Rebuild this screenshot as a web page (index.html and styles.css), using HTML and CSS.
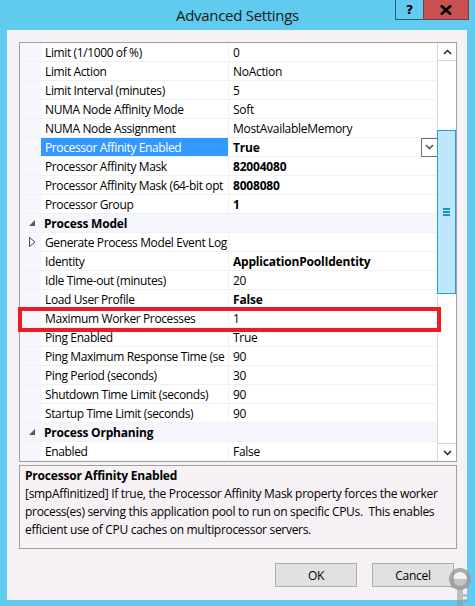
FILE: index.html
```html
<!DOCTYPE html>
<html>
<head>
<meta charset="utf-8">
<link rel="stylesheet" href="styles.css">
</head>
<body>
<div class="window">
  <div class="titlebar">
    <div class="spacer"></div>
    <div class="title">Advanced Settings</div>
    <div class="caption">
      <div class="cap-btn help">?</div>
      <div class="cap-btn close">
        <svg width="12" height="10" viewBox="0 0 12 10"><path d="M1 0.5 L11 9.5 M11 0.5 L1 9.5" stroke="#000" stroke-width="2.6"/></svg>
      </div>
    </div>
  </div>
  <div class="client">
    <div class="grid">
      <div class="rows">
        <div class="row"><div class="gut"></div><div class="name">Limit (1/1000 of %)</div><div class="val">0</div></div>
        <div class="row"><div class="gut"></div><div class="name">Limit Action</div><div class="val">NoAction</div></div>
        <div class="row"><div class="gut"></div><div class="name">Limit Interval (minutes)</div><div class="val">5</div></div>
        <div class="row"><div class="gut"></div><div class="name">NUMA Node Affinity Mode</div><div class="val">Soft</div></div>
        <div class="row"><div class="gut"></div><div class="name">NUMA Node Assignment</div><div class="val">MostAvailableMemory</div></div>
        <div class="row"><div class="gut"></div><div class="name sel">Processor Affinity Enabled</div><div class="val b edit"><span>True</span><span class="dd"><svg width="9" height="6" viewBox="0 0 9 6"><path d="M1 1 L4.5 4.5 L8 1" fill="none" stroke="#555" stroke-width="1.6"/></svg></span></div></div>
        <div class="row"><div class="gut"></div><div class="name">Processor Affinity Mask</div><div class="val b">82004080</div></div>
        <div class="row"><div class="gut"></div><div class="name">Processor Affinity Mask (64-bit opt</div><div class="val b">8008080</div></div>
        <div class="row"><div class="gut"></div><div class="name">Processor Group</div><div class="val b">1</div></div>
        <div class="row cat"><div class="gut"><svg width="7" height="7" viewBox="0 0 7 7"><polygon points="6,0 6,6 0,6" fill="#595959"/></svg></div><div class="catname">Process Model</div></div>
        <div class="row"><div class="gut"><svg width="7" height="10" viewBox="0 0 7 10"><polygon points="0.5,0.5 6,5 0.5,9.5" fill="#fff" stroke="#444" stroke-width="1"/></svg></div><div class="name">Generate Process Model Event Log</div><div class="val"></div></div>
        <div class="row"><div class="gut"></div><div class="name">Identity</div><div class="val b">ApplicationPoolIdentity</div></div>
        <div class="row"><div class="gut"></div><div class="name">Idle Time-out (minutes)</div><div class="val">20</div></div>
        <div class="row"><div class="gut"></div><div class="name">Load User Profile</div><div class="val b">False</div></div>
        <div class="row"><div class="gut"></div><div class="name">Maximum Worker Processes</div><div class="val">1</div></div>
        <div class="row"><div class="gut"></div><div class="name">Ping Enabled</div><div class="val">True</div></div>
        <div class="row"><div class="gut"></div><div class="name">Ping Maximum Response Time (se</div><div class="val">90</div></div>
        <div class="row"><div class="gut"></div><div class="name">Ping Period (seconds)</div><div class="val">30</div></div>
        <div class="row"><div class="gut"></div><div class="name">Shutdown Time Limit (seconds)</div><div class="val">90</div></div>
        <div class="row"><div class="gut"></div><div class="name">Startup Time Limit (seconds)</div><div class="val">90</div></div>
        <div class="row cat"><div class="gut"><svg width="7" height="7" viewBox="0 0 7 7"><polygon points="6,0 6,6 0,6" fill="#595959"/></svg></div><div class="catname">Process Orphaning</div></div>
        <div class="row"><div class="gut"></div><div class="name">Enabled</div><div class="val">False</div></div>
      </div>
      <div class="scrollbar">
        <div class="arrow"><svg width="9" height="6" viewBox="0 0 9 6"><path d="M1 5 L4.5 1.5 L8 5" fill="none" stroke="#222" stroke-width="1.5"/></svg></div>
        <div class="track">
          <div class="thumb"><span class="grip"></span><span class="grip"></span><span class="grip"></span></div>
        </div>
        <div class="arrow"><svg width="9" height="6" viewBox="0 0 9 6"><path d="M1 1 L4.5 4.5 L8 1" fill="none" stroke="#222" stroke-width="1.5"/></svg></div>
      </div>
      <div class="highlight"></div>
    </div>
    <div class="desc">
      <div class="desc-title">Processor Affinity Enabled</div>
      <div class="desc-text">[smpAffinitized] If true, the Processor Affinity Mask property forces the worker process(es) serving this application pool to run on specific CPUs.&nbsp; This enables efficient use of CPU caches on multiprocessor servers.</div>
    </div>
    <div class="buttons">
      <div class="btn">OK</div>
      <div class="btn">Cancel</div>
    </div>
  </div>
  <svg class="keyicon" width="24" height="40" viewBox="0 0 24 40">
    <circle cx="12" cy="11" r="9" fill="none" stroke="#9a9a9a" stroke-width="4" opacity="0.8"/>
    <rect x="3" y="11" width="18" height="9" fill="#9a9a9a" opacity="0.55"/>
    <rect x="9" y="19" width="6" height="20" fill="#9a9a9a" opacity="0.6"/>
    <rect x="15" y="26" width="4" height="3" fill="#9a9a9a" opacity="0.6"/>
    <rect x="15" y="31" width="4" height="3" fill="#9a9a9a" opacity="0.6"/>
  </svg>
</div>
</body>
</html>
```

FILE: styles.css
```css
* { box-sizing: border-box; }
html, body { margin: 0; padding: 0; }
body {
  width: 475px;
  height: 606px;
  overflow: hidden;
  background: #60caef;
  font-family: "Open Sans", "Noto Sans", sans-serif;
  font-size: 12px;
  letter-spacing: -0.3px;
  color: #000;
}
.window {
  position: relative;
  width: 475px;
  height: 606px;
  background: #60caef;
}
.titlebar {
  height: 30px;
  display: grid;
  grid-template-columns: 1fr auto 1fr;
  align-items: start;
}
.title {
  font-size: 15px;
  line-height: 30px;
  color: #1a1a1a;
  letter-spacing: -0.3px;
}
.caption {
  display: flex;
  justify-content: flex-end;
  padding-right: 6px;
}
.cap-btn {
  height: 20px;
  display: flex;
  align-items: center;
  justify-content: center;
  border: 1px solid #2c5a78;
  border-top: none;
}
.help {
  width: 28px;
  font-family: "DejaVu Sans", sans-serif;
  font-weight: bold;
  font-size: 13px;
  letter-spacing: 0;
  border-right: none;
}
.close {
  width: 46px;
  background: #c75050;
  border-color: #7c3a3a;
}
.client {
  margin: 0 8px 0 7px;
  height: 570px;
  background: #f6f1f5;
  padding: 12px 10px 0 12px;
}
.grid {
  position: relative;
  width: 438px;
  height: 420px;
  border: 1px solid #a0a0a0;
  background: #fff;
  display: flex;
}
.rows {
  width: 417px;
  display: flex;
  flex-direction: column;
}
.row {
  height: 19px;
  display: flex;
  border-bottom: 1px solid #f0f0f7;
  line-height: 17px;
}
.gut {
  width: 21px;
  flex: none;
  background: #f6f6fe;
  display: flex;
  align-items: center;
  justify-content: center;
  padding-left: 4px;
}
.name {
  width: 188px;
  flex: none;
  padding-left: 4px;
  padding-top: 1px;
  white-space: nowrap;
  overflow: hidden;
  border-right: 1px solid #f0f0f7;
  background: #fff;
  letter-spacing: -0.38px;
}
.name.sel {
  background: #3399ff;
  color: #fff;
}
.val {
  flex: 1;
  padding-left: 4px;
  padding-top: 1px;
  white-space: nowrap;
  overflow: hidden;
  background: #fff;
}
.b { font-weight: bold; letter-spacing: -0.2px; }
.edit {
  display: flex;
  justify-content: space-between;
  align-items: center;
  overflow: visible;
}
.dd {
  width: 17px;
  height: 19px;
  margin-top: -1px;
  border: 1px solid #707070;
  background: #fff;
  display: flex;
  align-items: center;
  justify-content: center;
  margin-right: -1px;
}
.row.cat {
  background: #f6f6fd;
}
.row.cat .gut { background: #f6f6fd; }
.catname {
  padding-left: 3px;
  padding-top: 1px;
  font-weight: bold;
  letter-spacing: -0.2px;
}
.scrollbar {
  width: 19px;
  display: flex;
  flex-direction: column;
  border-left: 1px solid #dadada;
  background: #fff;
}
.arrow {
  height: 18px;
  display: flex;
  align-items: center;
  justify-content: center;
  border: 1px solid #d0d0d0;
  border-left: none;
  border-right: none;
}
.arrow:first-child { border-top: none; }
.arrow:last-child { border-bottom: none; }
.track {
  flex: 1;
  padding-top: 69px;
}
.thumb {
  height: 164px;
  background: #bee6fd;
  border: 1px solid #26a0da;
  margin-left: -1px;
  display: flex;
  flex-direction: column;
  align-items: center;
  justify-content: center;
  gap: 1px;
}
.grip {
  display: block;
  width: 7px;
  height: 2px;
  background: #1e90c8;
}
.highlight {
  position: absolute;
  left: -2px;
  top: 264px;
  width: 423px;
  height: 25px;
  border: 4px solid #ed1c24;
}
.desc {
  margin-top: 3px;
  width: 438px;
  height: 84px;
  border: 1px solid #a0a0a0;
  padding: 1px 5px;
  line-height: 18px;
}
.desc-title {
  font-weight: bold;
  letter-spacing: -0.2px;
}
.buttons {
  margin-top: 14px;
  display: flex;
  justify-content: flex-end;
  gap: 15px;
  padding-right: 3px;
  width: 438px;
}
.btn {
  width: 82px;
  height: 24px;
  background: #e1e1e1;
  border: 1px solid #adadad;
  display: flex;
  align-items: center;
  justify-content: center;
}
.keyicon {
  position: absolute;
  left: 448px;
  top: 568px;
}
```
